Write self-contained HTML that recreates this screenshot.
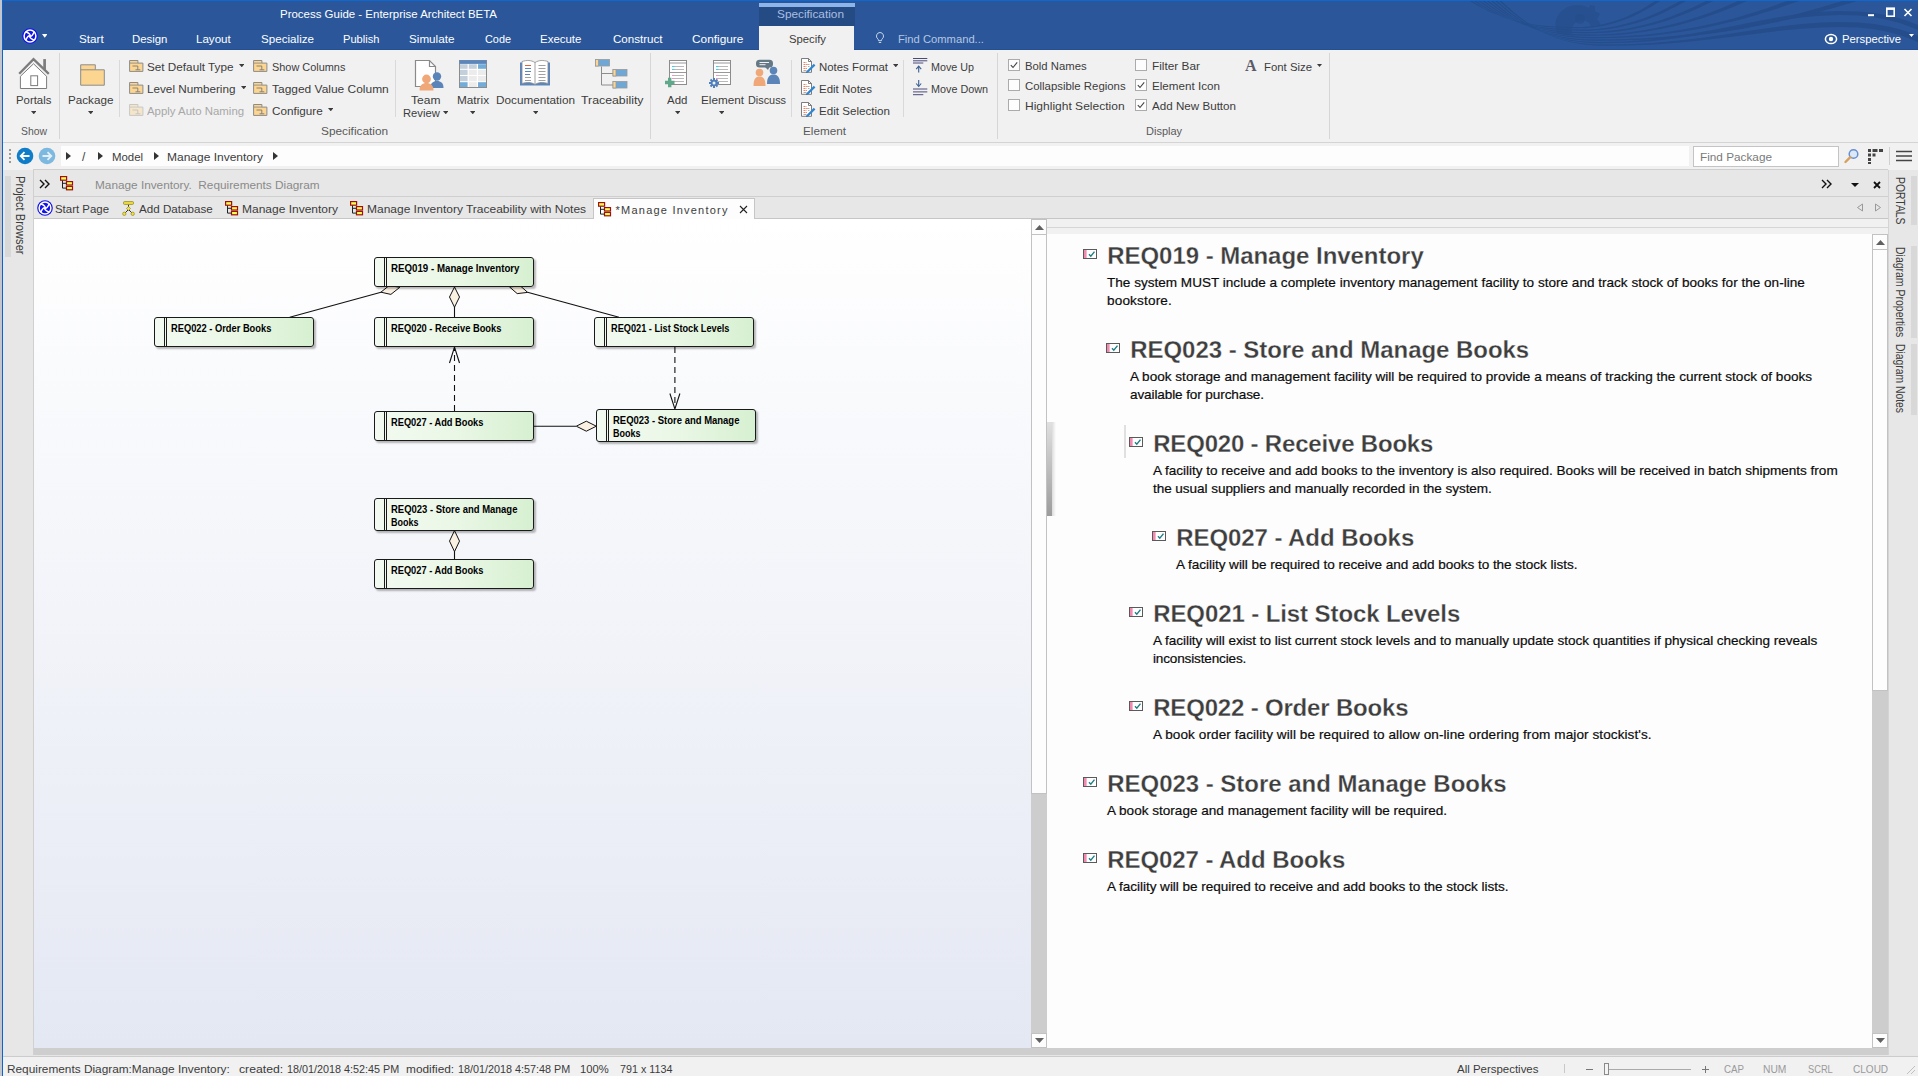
<!DOCTYPE html>
<html lang="en"><head><meta charset="utf-8"><title>Process Guide - Enterprise Architect BETA</title>
<style>
html,body{margin:0;padding:0}
body{width:1918px;height:1076px;overflow:hidden;position:relative;background:#f1f1f1;font-family:"Liberation Sans",sans-serif;font-size:11px;color:#3c3c3c}
.b{position:absolute;display:block}
.t{position:absolute;white-space:pre;line-height:16px;transform-origin:0 50%}
.h{position:absolute;white-space:pre;font:bold 24px/28px "Liberation Sans",sans-serif;color:#3e3e3e;-webkit-text-stroke:.28px #fdfdfd}
.p{position:absolute;white-space:pre;font:13.57px/18px "Liberation Sans",sans-serif;color:#0c0c0c;-webkit-text-stroke:.2px #0c0c0c}
.rq{position:absolute;white-space:pre;font:bold 10.8px/13px "Liberation Sans",sans-serif;color:#000;transform-origin:0 0}
.v{position:absolute;white-space:pre;font:13px/14px "Liberation Sans",sans-serif;color:#3c3c3c;transform-origin:0 0;transform:rotate(90deg)}
.el{position:absolute;box-sizing:border-box;border:1px solid #1a1a1a;border-radius:3px;background:linear-gradient(90deg,#f3faf1 0%,#eaf7e6 50%,#d7f0d1 100%);box-shadow:2px 2px 2px rgba(0,0,0,.28)}
.el i{position:absolute;top:0;bottom:0;left:9px;width:1px;border-left:1px solid #1a1a1a;border-right:1px solid #1a1a1a}
</style></head>
<body>
<div class="b" style="left:0px;top:0px;width:1918px;height:50px;background:#2b579a;"></div>
<div class="b" style="left:0px;top:0px;width:1918px;height:1px;background:#0d68d0;"></div>
<div class="b" style="left:3px;top:49px;width:1915px;height:1px;background:#244f93;"></div>
<svg class="b" style="left:1440px;top:1px" width="478" height="49" viewBox="0 0 478 49"><g fill="#244b88" opacity=".8"><polygon points="30.0,0.0 36.5,4.0 43.1,7.6 49.8,10.9 56.7,13.8 63.8,16.4 71.2,18.7 78.9,20.7 87.0,22.3 95.6,23.7 104.6,24.7 114.1,25.4 124.3,25.9 135.0,26.0 142.3,26.0 149.5,25.4 156.8,24.5 164.1,23.0 171.4,21.1 178.6,18.8 185.9,15.9 193.2,12.6 200.5,8.9 207.7,4.7 215.0,0.0 220.0,0.0 212.5,4.9 204.9,9.3 197.4,13.2 189.8,16.7 182.3,19.6 174.7,22.1 167.2,24.1 159.6,25.6 152.1,26.6 144.5,27.2 137.0,27.2 126.3,27.1 116.1,26.6 106.6,25.9 97.6,24.8 89.1,23.3 81.0,21.6 73.2,19.5 65.8,17.1 58.7,14.4 51.9,11.3 45.2,7.9 38.6,4.1 32.1,0.0"/><polygon points="34.2,0.0 40.7,4.3 47.2,8.2 53.9,11.7 60.8,14.9 67.9,17.8 75.3,20.3 83.0,22.5 91.1,24.3 99.6,25.8 108.6,27.0 118.1,27.8 128.3,28.3 139.0,28.5 148.2,28.4 157.4,27.9 166.5,26.8 175.7,25.2 184.9,23.1 194.1,20.5 203.3,17.4 212.5,13.8 221.6,9.7 230.8,5.1 240.0,0.0 246.0,0.0 236.5,5.3 226.9,10.1 217.4,14.4 207.8,18.2 198.3,21.4 188.7,24.1 179.2,26.3 169.6,27.9 160.1,29.1 150.5,29.7 141.0,29.8 130.3,29.6 120.1,29.0 110.6,28.2 101.6,26.9 93.1,25.3 85.0,23.4 77.3,21.1 70.0,18.5 62.9,15.5 56.0,12.1 49.3,8.4 42.8,4.4 36.3,0.0"/><polygon points="38.4,0.0 44.9,4.5 51.4,8.7 58.1,12.5 65.0,16.0 72.0,19.1 79.4,21.9 87.1,24.3 95.2,26.3 103.7,28.0 112.6,29.3 122.2,30.3 132.3,30.8 143.0,31.0 154.2,30.9 165.4,30.3 176.5,29.1 187.7,27.4 198.9,25.1 210.1,22.3 221.3,18.9 232.5,15.0 243.6,10.5 254.8,5.5 266.0,0.0 273.0,0.0 261.4,5.8 249.7,11.0 238.1,15.6 226.5,19.7 214.8,23.2 203.2,26.1 191.5,28.4 179.9,30.2 168.3,31.5 156.6,32.1 145.0,32.2 134.3,32.1 124.2,31.5 114.7,30.5 105.7,29.1 97.2,27.3 89.1,25.2 81.5,22.7 74.1,19.8 67.0,16.6 60.2,13.0 53.5,9.0 47.0,4.7 40.5,0.0"/><polygon points="42.6,0.0 49.1,4.8 55.6,9.3 62.3,13.4 69.1,17.1 76.2,20.5 83.5,23.5 91.2,26.1 99.2,28.3 107.7,30.2 116.7,31.6 126.2,32.7 136.3,33.3 147.0,33.5 160.7,33.4 174.5,32.7 188.2,31.4 201.9,29.5 215.6,27.1 229.4,24.0 243.1,20.4 256.8,16.2 270.5,11.4 284.3,6.0 298.0,0.0 307.0,0.0 292.6,6.2 278.3,11.8 263.9,16.8 249.5,21.1 235.2,24.9 220.8,28.1 206.5,30.6 192.1,32.6 177.7,33.9 163.4,34.6 149.0,34.8 138.3,34.5 128.2,33.9 118.7,32.8 109.7,31.3 101.3,29.3 93.2,27.0 85.6,24.3 78.2,21.2 71.2,17.7 64.4,13.8 57.7,9.6 51.2,5.0 44.7,0.0"/><polygon points="46.8,0.0 53.3,5.1 59.8,9.8 66.5,14.2 73.3,18.2 80.3,21.8 87.6,25.1 95.3,27.9 103.3,30.3 111.7,32.4 120.7,33.9 130.2,35.1 140.3,35.8 151.0,36.0 168.8,35.9 186.6,35.1 204.5,33.7 222.3,31.7 240.1,29.1 257.9,25.8 275.7,21.9 293.5,17.4 311.4,12.2 329.2,6.4 347.0,0.0 359.0,0.0 340.3,6.6 321.5,12.6 302.8,17.9 284.1,22.6 265.4,26.7 246.6,30.0 227.9,32.8 209.2,34.9 190.5,36.3 171.7,37.1 153.0,37.2 142.3,37.0 132.2,36.3 122.7,35.1 113.8,33.4 105.3,31.3 97.3,28.8 89.7,25.9 82.4,22.5 75.4,18.8 68.5,14.6 61.9,10.1 55.4,5.2 48.9,0.0"/><polygon points="51.0,0.0 57.5,5.4 64.0,10.4 70.6,15.0 77.4,19.3 84.4,23.2 91.7,26.7 99.4,29.7 107.4,32.3 115.8,34.5 124.7,36.2 134.2,37.5 144.3,38.2 155.0,38.5 177.5,38.3 199.9,37.5 222.4,36.0 244.8,33.9 267.3,31.0 289.7,27.5 312.2,23.4 334.6,18.5 357.1,13.0 379.5,6.8 402.0,0.0 417.0,0.0 393.4,7.1 369.7,13.4 346.1,19.1 322.5,24.1 298.8,28.4 275.2,32.0 251.5,35.0 227.9,37.2 204.3,38.7 180.6,39.6 157.0,39.8 146.3,39.5 136.2,38.7 126.7,37.4 117.8,35.6 109.4,33.4 101.4,30.6 93.8,27.5 86.5,23.9 79.5,19.9 72.7,15.5 66.1,10.7 59.6,5.5 53.1,0.0"/><polygon points="55.2,0.0 61.7,5.6 68.2,10.9 74.8,15.9 81.6,20.4 88.6,24.5 95.8,28.3 103.4,31.5 111.4,34.4 119.8,36.7 128.7,38.6 138.2,39.9 148.3,40.7 159.0,41.0 184.4,40.5 209.0,38.7 232.8,35.8 255.7,32.1 278.0,28.0 299.6,23.7 320.6,19.6 341.1,15.8 361.1,12.8 380.8,10.7 400.0,10.0 418.6,10.6 434.4,12.1 448.0,14.4 459.6,17.3 469.4,20.5 478.0,24.0 478.0,29.0 469.4,25.5 459.6,22.0 448.0,18.9 434.4,16.3 418.6,14.6 400.0,14.0 380.8,14.7 361.3,16.5 341.5,19.3 321.2,22.7 300.5,26.5 279.1,30.5 257.1,34.2 234.4,37.5 210.8,40.2 186.4,41.8 161.0,42.2 150.3,42.0 140.2,41.1 130.8,39.7 121.9,37.8 113.5,35.4 105.5,32.4 97.9,29.0 90.6,25.2 83.7,21.0 76.9,16.3 70.3,11.2 63.8,5.8 57.3,0.0"/><polygon points="59.4,0.0 65.9,5.9 72.4,11.5 79.0,16.7 85.7,21.5 92.7,25.9 100.0,29.8 107.5,33.3 115.5,36.4 123.9,38.9 132.8,40.9 142.2,42.3 152.3,43.2 163.0,43.5 188.4,43.2 212.7,41.9 236.0,39.8 258.5,37.2 280.3,34.2 301.3,31.1 321.8,28.0 341.9,25.3 361.5,23.0 380.8,21.5 400.0,21.0 418.6,21.6 434.4,23.1 448.0,25.4 459.6,28.3 469.4,31.5 478.0,35.0 478.0,41.0 469.4,37.5 459.6,34.0 448.0,30.9 434.4,28.3 418.6,26.6 400.0,26.0 380.9,26.5 361.7,27.7 342.2,29.6 322.4,31.9 302.2,34.4 281.4,37.1 259.9,39.6 237.7,41.8 214.5,43.5 190.3,44.5 165.0,44.8 154.3,44.4 144.2,43.5 134.8,42.0 125.9,40.0 117.5,37.4 109.6,34.2 102.0,30.6 94.8,26.6 87.8,22.0 81.1,17.1 74.5,11.8 68.0,6.1 61.5,0.0"/><path d="M118 33c-8-14 4-29 19-29 5 0 9 1 12 3l1-3 5 1 0 5 5 3-3 5c2 2 3 4 3 6l-9 1c-3-8-16-8-19 2 -1 3 0 6 2 8z" opacity=".7"/><circle cx="140" cy="18" r="5" opacity=".7"/></g></svg>
<div class="b" style="left:0px;top:0px;width:2px;height:1076px;background:#c3c7cd;"></div>
<div class="b" style="left:2px;top:0px;width:1px;height:1076px;background:#0f63cc;"></div>
<div class="t" style="left:280px;top:6.3px;color:#fff;transform:scaleX(1.042);">Process Guide - Enterprise Architect BETA</div>
<div class="b" style="left:759px;top:3px;width:96px;height:23px;background:#254b85;"></div>
<div class="b" style="left:759px;top:3px;width:96px;height:4px;background:#8db5ea;"></div>
<div class="t" style="left:776.5px;top:6.3px;color:#a9bfe0;transform:scaleX(1.074);">Specification</div>
<svg class="b" style="left:1865px;top:6px" width="50" height="16" viewBox="0 0 50 16"><g fill="none" stroke="#fff" stroke-width="1.6"><path d="M3 9.2h6" stroke-width="2"/>
<rect x="21.8" y="2.8" width="7.4" height="7.4"/><path d="M21 2.6h9" stroke-width="2.4"/>
<path d="M39.5 3l7 7M46.5 3l-7 7"/></g></svg>
<svg class="b" style="left:22px;top:28px" width="16" height="16" viewBox="0 0 16 16"><circle cx="8" cy="8" r="7.800" fill="#1212ea"/><circle cx="8" cy="8" r="5.900" fill="#1212ea" stroke="#fff" stroke-width="1.500"/><g fill="none" stroke="#fff" stroke-width="1.500"><path d="M3.800 3.800C7 5 9 7 8 8S9 11 12.200 12.200"/><path d="M12.200 3.800C11 7 9 9 8 8S5 9 3.800 12.200"/></g></svg>
<svg class="b" style="left:41.75px;top:33.9px" width="5.5" height="3.8" viewBox="0 0 5.5 3.8"><path d="M0 0H5.5L2.75 3.8Z" fill="#fff"/></svg>
<div class="t" style="left:79.4px;top:31.3px;color:#fff;transform:scaleX(1.063);">Start</div>
<div class="t" style="left:132.1px;top:31.3px;color:#fff;transform:scaleX(1.034);">Design</div>
<div class="t" style="left:196.2px;top:31.3px;color:#fff;transform:scaleX(1.051);">Layout</div>
<div class="t" style="left:260.6px;top:31.3px;color:#fff;transform:scaleX(1.057);">Specialize</div>
<div class="t" style="left:343.3px;top:31.3px;color:#fff;transform:scaleX(1.009);">Publish</div>
<div class="t" style="left:409.4px;top:31.3px;color:#fff;transform:scaleX(1.061);">Simulate</div>
<div class="t" style="left:484.5px;top:31.3px;color:#fff;transform:scaleX(0.989);">Code</div>
<div class="t" style="left:540.2px;top:31.3px;color:#fff;transform:scaleX(1.042);">Execute</div>
<div class="t" style="left:612.5px;top:31.3px;color:#fff;transform:scaleX(1.052);">Construct</div>
<div class="t" style="left:692.4px;top:31.3px;color:#fff;transform:scaleX(1.078);">Configure</div>
<div class="b" style="left:759px;top:26px;width:95px;height:24px;background:#f1f1f1;"></div>
<div class="t" style="left:788.5px;top:31.3px;transform:scaleX(1.026);">Specify</div>
<svg class="b" style="left:874px;top:31px" width="12" height="15" viewBox="0 0 12 15"><g fill="none" stroke="#c5d4ea" stroke-width="1"><path d="M6 1.5a3.6 3.6 0 0 1 2.2 6.4c-.5.5-.7 1-.7 1.8h-3c0-.8-.2-1.3-.7-1.8A3.6 3.6 0 0 1 6 1.5z"/><path d="M4.8 11.5h2.4"/></g></svg>
<div class="t" style="left:898.3px;top:31.3px;color:#b4c6e2;transform:scaleX(1.019);">Find Command...</div>
<svg class="b" style="left:1824px;top:32px" width="14" height="14" viewBox="0 0 14 14"><ellipse cx="7" cy="7" rx="5.6" ry="4.6" fill="none" stroke="#fff" stroke-width="1.5"/><circle cx="7" cy="7" r="2.2" fill="#fff"/></svg>
<div class="t" style="left:1842px;top:31.3px;color:#fff;transform:scaleX(1.027);">Perspective</div>
<svg class="b" style="left:1909.0px;top:33.5px" width="5" height="3" viewBox="0 0 5 3"><path d="M0 0H5L2.5 3Z" fill="#fff"/></svg>
<div class="b" style="left:3px;top:50px;width:1915px;height:92px;background:#f1f1f1;"></div>
<div class="b" style="left:3px;top:142px;width:1915px;height:1px;background:#d4d4d4;"></div>
<div class="b" style="left:59px;top:53px;width:1px;height:86px;background:#d6d6d6;"></div>
<div class="b" style="left:650px;top:53px;width:1px;height:86px;background:#d6d6d6;"></div>
<div class="b" style="left:997px;top:53px;width:1px;height:86px;background:#d6d6d6;"></div>
<div class="b" style="left:1329px;top:53px;width:1px;height:86px;background:#d6d6d6;"></div>
<div class="b" style="left:119px;top:60px;width:1px;height:57px;background:#d9d9d9;"></div>
<div class="b" style="left:395px;top:60px;width:1px;height:57px;background:#d9d9d9;"></div>
<div class="b" style="left:791px;top:60px;width:1px;height:57px;background:#d9d9d9;"></div>
<div class="b" style="left:903px;top:60px;width:1px;height:57px;background:#d9d9d9;"></div>
<div class="t" style="left:20.7px;top:123.3px;color:#595959;transform:scaleX(0.945);">Show</div>
<div class="t" style="left:321.3px;top:123.3px;color:#595959;transform:scaleX(1.076);">Specification</div>
<div class="t" style="left:803px;top:123.3px;color:#595959;transform:scaleX(1.066);">Element</div>
<div class="t" style="left:1146px;top:123.3px;color:#595959;">Display</div>
<svg class="b" style="left:17px;top:56px" width="34" height="34" viewBox="0 0 34 34"><path d="M3.400 20.300L16.500 7.800 29.600 20.300V32.500H3.400z" fill="#fff" stroke="#7c7c7c" stroke-width="1"/><path d="M2.200 17.800L16.500 3.200 31.800 17.800" fill="none" stroke="#7c7c7c" stroke-width="2.300"/><path d="M27.600 3.100v11" stroke="#7c7c7c" stroke-width="2.700"/><rect x="13.800" y="19.800" width="6.800" height="9.800" fill="#fff" stroke="#7c7c7c" stroke-width="1"/></svg>
<div class="t" style="left:16px;top:92.3px;transform:scaleX(1.034);">Portals</div>
<svg class="b" style="left:30.75px;top:110.75px" width="5.5" height="3.3" viewBox="0 0 5.5 3.3"><path d="M0 0H5.5L2.75 3.3Z" fill="#3c3c3c"/></svg>
<svg class="b" style="left:79px;top:63px" width="27" height="23" viewBox="0 0 27 23"><path d="M1.700 1.800h14.600v5h9v15.400H1.700z" fill="#fcd590" stroke="#8c8c8c" stroke-width="1"/><path d="M1.700 6.800h14.600" stroke="#8c8c8c" stroke-width="1"/></svg>
<div class="t" style="left:68px;top:92.3px;transform:scaleX(1.061);">Package</div>
<svg class="b" style="left:87.75px;top:110.75px" width="5.5" height="3.3" viewBox="0 0 5.5 3.3"><path d="M0 0H5.5L2.75 3.3Z" fill="#3c3c3c"/></svg>
<svg class="b" style="left:129px;top:60px;overflow:visible" width="16" height="16" viewBox="0 0 16 16"><path d="M.6 .5h8.300v2.600h5v8.300H.6z" fill="#fcd590" stroke="#8c8c8c" stroke-width="1"/><path d="M.6 3.100h8.300" stroke="#8c8c8c" stroke-width=".9"/><path d="M3.500 6h5.300v3.800M6.500 9.800h4.800" fill="none" stroke="#7a7a7a" stroke-width=".9"/></svg>
<div class="t" style="left:147.1px;top:59.3px;transform:scaleX(1.066);">Set Default Type</div>
<svg class="b" style="left:238.75px;top:64.14999999999999px" width="5.5" height="3.3" viewBox="0 0 5.5 3.3"><path d="M0 0H5.5L2.75 3.3Z" fill="#3c3c3c"/></svg>
<svg class="b" style="left:129px;top:82px;overflow:visible" width="16" height="16" viewBox="0 0 16 16"><path d="M.6 .5h8.300v2.600h5v8.300H.6z" fill="#fcd590" stroke="#8c8c8c" stroke-width="1"/><path d="M.6 3.100h8.300" stroke="#8c8c8c" stroke-width=".9"/><path d="M3.500 6h5.300v3.800M6.500 9.800h4.800" fill="none" stroke="#7a7a7a" stroke-width=".9"/></svg>
<div class="t" style="left:147.1px;top:81.3px;transform:scaleX(1.064);">Level Numbering</div>
<svg class="b" style="left:240.75px;top:86.14999999999999px" width="5.5" height="3.3" viewBox="0 0 5.5 3.3"><path d="M0 0H5.5L2.75 3.3Z" fill="#3c3c3c"/></svg>
<svg class="b" style="left:129px;top:104px;overflow:visible;opacity:.4" width="16" height="16" viewBox="0 0 16 16"><path d="M.6 .5h8.300v2.600h5v8.300H.6z" fill="#fcd590" stroke="#8c8c8c" stroke-width="1"/><path d="M.6 3.100h8.300" stroke="#8c8c8c" stroke-width=".9"/><path d="M3.500 6h5.300v3.800M6.500 9.800h4.800" fill="none" stroke="#7a7a7a" stroke-width=".9"/></svg>
<div class="t" style="left:147.1px;top:103.3px;color:#a8a8a8;transform:scaleX(1.038);">Apply Auto Naming</div>
<svg class="b" style="left:253px;top:60px;overflow:visible" width="16" height="16" viewBox="0 0 16 16"><path d="M.6 .5h8.300v2.600h5v8.300H.6z" fill="#fcd590" stroke="#8c8c8c" stroke-width="1"/><path d="M.6 3.100h8.300" stroke="#8c8c8c" stroke-width=".9"/><path d="M3.500 6h5.300v3.800M6.500 9.800h4.800" fill="none" stroke="#7a7a7a" stroke-width=".9"/></svg>
<div class="t" style="left:271.6px;top:59.3px;transform:scaleX(0.992);">Show Columns</div>
<svg class="b" style="left:253px;top:82px;overflow:visible" width="16" height="16" viewBox="0 0 16 16"><path d="M.6 .5h8.300v2.600h5v8.300H.6z" fill="#fcd590" stroke="#8c8c8c" stroke-width="1"/><path d="M.6 3.100h8.300" stroke="#8c8c8c" stroke-width=".9"/><path d="M3.500 6h5.300v3.800M6.500 9.800h4.800" fill="none" stroke="#7a7a7a" stroke-width=".9"/></svg>
<div class="t" style="left:271.6px;top:81.3px;transform:scaleX(1.087);">Tagged Value Column</div>
<svg class="b" style="left:253px;top:104px;overflow:visible" width="16" height="16" viewBox="0 0 16 16"><path d="M.6 .5h8.300v2.600h5v8.300H.6z" fill="#fcd590" stroke="#8c8c8c" stroke-width="1"/><path d="M.6 3.100h8.300" stroke="#8c8c8c" stroke-width=".9"/><path d="M3.500 6h5.300v3.800M6.500 9.800h4.800" fill="none" stroke="#7a7a7a" stroke-width=".9"/></svg>
<div class="t" style="left:271.6px;top:103.3px;transform:scaleX(1.063);">Configure</div>
<svg class="b" style="left:327.75px;top:108.14999999999999px" width="5.5" height="3.3" viewBox="0 0 5.5 3.3"><path d="M0 0H5.5L2.75 3.3Z" fill="#3c3c3c"/></svg>
<svg class="b" style="left:413px;top:59px" width="32" height="32" viewBox="0 0 32 32"><path d="M2.5 1.5h14l6 6v20h-20z" fill="#fff" stroke="#8a8a8a" stroke-width="1.2"/><path d="M16.5 1.5v6h6" fill="none" stroke="#8a8a8a" stroke-width="1.2"/>
<circle cx="24" cy="17.5" r="4.2" fill="#5b84b8"/><path d="M17.5 29c0-5 2.5-7 6.5-7s6.500 2 6.500 7z" fill="#5b84b8"/>
<circle cx="13.500" cy="20" r="4.400" fill="#f0a878"/><path d="M6.500 31.500c0-5.500 3-7.500 7-7.500s7 2 7 7.500z" fill="#f0a878"/></svg>
<div class="t" style="left:411px;top:92.3px;transform:scaleX(1.093);">Team</div>
<div class="t" style="left:403px;top:105.3px;transform:scaleX(1.020);">Review</div>
<svg class="b" style="left:442.75px;top:110.75px" width="5.5" height="3.3" viewBox="0 0 5.5 3.3"><path d="M0 0H5.5L2.75 3.3Z" fill="#3c3c3c"/></svg>
<svg class="b" style="left:459px;top:60px" width="28" height="28" viewBox="0 0 28 28"><rect x=".5" y=".5" width="27" height="27" fill="#fff" stroke="#8c8c8c"/><rect x=".5" y=".3" width="27" height="3.600" fill="#5b86bd"/>
<g fill="#c3d0dc"><rect x="1" y="4.200" width="7.600" height="4.600"/><rect x="9.800" y="4.200" width="8" height="4.600"/><rect x="1" y="9.800" width="7.600" height="5.200"/><rect x="1" y="16" width="7.600" height="5.200"/></g>
<g fill="#74acd8"><rect x="19" y="4.200" width="8" height="4.600"/><rect x="1" y="22.200" width="7.600" height="4.800"/><rect x="19" y="22.200" width="8" height="4.800"/></g>
<g fill="#ececec"><rect x="9.800" y="9.800" width="8" height="5.200"/><rect x="19" y="9.800" width="8" height="5.200"/><rect x="9.800" y="16" width="8" height="5.200"/><rect x="19" y="16" width="8" height="5.200"/><rect x="9.800" y="22.200" width="8" height="4.800"/></g></svg>
<div class="t" style="left:457px;top:92.3px;transform:scaleX(1.069);">Matrix</div>
<svg class="b" style="left:469.75px;top:110.75px" width="5.5" height="3.3" viewBox="0 0 5.5 3.3"><path d="M0 0H5.5L2.75 3.3Z" fill="#3c3c3c"/></svg>
<svg class="b" style="left:519px;top:59px" width="32" height="28" viewBox="0 0 32 28"><path d="M1 3.500h30V26.500H1z" fill="#5b86bd"/><path d="M3 2.500c5-1.500 9-1.500 13 1 4-2.500 8-2.500 13-1V24.500c-5-1.500-9-1.500-13 1-4-2.500-8-2.500-13-1z" fill="#fff" stroke="#8c8c8c" stroke-width=".8"/><path d="M16 3.500v22" stroke="#8c8c8c" stroke-width=".8"/>
<g stroke-width="1"><path d="M6 6.500h6" stroke="#e0603c"/><path d="M6 9.500h6M6 12.500h6M6 15.500h5" stroke="#5b86bd"/><path d="M6 18.500h6M6 21.500h6M19.500 6.500h7M19.500 9.500h7M19.500 12.500h7M19.500 15.500h7M19.500 18.500h7M19.500 21.500h7" stroke="#a0a0a0"/></g></svg>
<div class="t" style="left:496px;top:92.3px;transform:scaleX(1.068);">Documentation</div>
<svg class="b" style="left:532.75px;top:110.75px" width="5.5" height="3.3" viewBox="0 0 5.5 3.3"><path d="M0 0H5.5L2.75 3.3Z" fill="#3c3c3c"/></svg>
<svg class="b" style="left:595px;top:58px" width="33" height="32" viewBox="0 0 33 32"><path d="M6 8v27" stroke="none"/><path d="M6.500 8.500v18.500h12M6.500 15.500h12" fill="none" stroke="#8c8c8c" stroke-width="1"/>
<g stroke="#9a9a9a" stroke-width=".8"><rect x=".5" y="1.500" width="14" height="6.500" fill="#6fa8d6"/><rect x=".5" y="1.500" width="3" height="6.500" fill="#fcd592"/>
<rect x="18" y="11.500" width="14" height="6.500" fill="#6fa8d6"/><rect x="18" y="11.500" width="3" height="6.500" fill="#fcd592"/>
<rect x="18" y="23.500" width="14" height="6.500" fill="#6fa8d6"/><rect x="18" y="23.500" width="3" height="6.500" fill="#fcd592"/></g></svg>
<div class="t" style="left:581px;top:92.3px;transform:scaleX(1.119);">Traceability</div>
<svg class="b" style="left:664px;top:60px" width="26" height="30" viewBox="0 0 26 30"><rect x="5.500" y=".5" width="17" height="24" fill="#fff" stroke="#8c8c8c"/><path d="M5.500 3h17M5.500 12.500h17" stroke="#8c8c8c" stroke-width=".9"/><g stroke-width="1"><path d="M8 6.500h12M8 9.500h12M8 15.500h12M8 18.500h12M8 21.500h12" stroke="#b8b8b8"/><path d="M8 6.500h2.500M8 9.500h2.500" stroke="#40d0e8"/><path d="M8 15.500h2.500M8 18.500h2.500" stroke="#f890c8"/></g><path d="M1 22.500h9.500M5.700 17.800v9.500" stroke="#5fa88a" stroke-width="3.400"/></svg>
<div class="t" style="left:667px;top:92.3px;transform:scaleX(1.042);">Add</div>
<svg class="b" style="left:674.75px;top:110.75px" width="5.5" height="3.3" viewBox="0 0 5.5 3.3"><path d="M0 0H5.5L2.75 3.3Z" fill="#3c3c3c"/></svg>
<svg class="b" style="left:708px;top:60px" width="26" height="30" viewBox="0 0 26 30"><rect x="5.500" y=".5" width="17" height="24" fill="#fff" stroke="#8c8c8c"/><path d="M5.500 3h17M5.500 12.500h17" stroke="#8c8c8c" stroke-width=".9"/><g stroke-width="1"><path d="M8 6.500h12M8 9.500h12M8 15.500h12M8 18.500h12M8 21.500h12" stroke="#b8b8b8"/><path d="M8 6.500h2.500M8 9.500h2.500" stroke="#40d0e8"/><path d="M8 15.500h2.500M8 18.500h2.500" stroke="#f890c8"/></g><g transform="translate(6 23)"><g stroke="#4f7fbd" stroke-width="2"><path d="M0-5V5M-5 0H5M-3.500-3.500L3.500 3.500M3.500-3.500L-3.500 3.500"/></g><circle r="3.300" fill="#4f7fbd"/><circle r="1.500" fill="#f1f1f1"/></g></svg>
<div class="t" style="left:701px;top:92.3px;transform:scaleX(1.066);">Element</div>
<svg class="b" style="left:718.75px;top:110.75px" width="5.5" height="3.3" viewBox="0 0 5.5 3.3"><path d="M0 0H5.5L2.75 3.3Z" fill="#3c3c3c"/></svg>
<svg class="b" style="left:752px;top:59px" width="30" height="30" viewBox="0 0 30 30"><rect x="4" y=".8" width="17" height="7.800" rx="3.500" fill="#647886"/><path d="M13 8l3 3 1.500-3z" fill="#647886"/><path d="M7.500 3.500h9.500M7.500 5.700h6" stroke="#fff" stroke-width=".9"/>
<circle cx="7.500" cy="13.500" r="3.800" fill="#f0a878"/><path d="M1.500 27c0-7 2-9.500 6-9.500s6 2.500 6 9.500z" fill="#f0a878"/>
<circle cx="21.500" cy="11.500" r="3.800" fill="#5b84b8"/><path d="M15 25c0-7 2.500-9.500 6.500-9.500s6.500 2.500 6.500 9.500z" fill="#5b84b8"/></svg>
<div class="t" style="left:748px;top:92.3px;transform:scaleX(0.987);">Discuss</div>
<svg class="b" style="left:801px;top:58.3px;overflow:visible" width="16" height="16" viewBox="0 0 16 16"><path d="M.5.5h7l3 3v10.800h-10z" fill="#fff" stroke="#6e6e6e" stroke-width=".9"/><path d="M7.500.5v3h3" fill="none" stroke="#6e6e6e" stroke-width=".9"/><path d="M2.500 4.500h3M2.500 6.500h4M2.500 8.500h3M2.500 10.500h3.500" stroke="#f0603c" stroke-width=".8" stroke-dasharray="2 .6"/><path d="M6.500 6.500h2M7 8.500h1.500M2.500 12.500h3" stroke="#9a9a9a" stroke-width=".8"/><path d="M13.600 6.600l-7.400 7.400" stroke="#2f86d0" stroke-width="2.200"/><path d="M5 15l.6-1.900 1.300 1.300z" fill="#2f6ea8"/></svg>
<div class="t" style="left:819px;top:59.3px;transform:scaleX(1.036);">Notes Format</div>
<svg class="b" style="left:892.75px;top:64.14999999999999px" width="5.5" height="3.3" viewBox="0 0 5.5 3.3"><path d="M0 0H5.5L2.75 3.3Z" fill="#3c3c3c"/></svg>
<svg class="b" style="left:801px;top:80.3px;overflow:visible" width="16" height="16" viewBox="0 0 16 16"><path d="M.5.5h7l3 3v10.800h-10z" fill="#fff" stroke="#6e6e6e" stroke-width=".9"/><path d="M7.500.5v3h3" fill="none" stroke="#6e6e6e" stroke-width=".9"/><path d="M2.500 4.500h3M2.500 6.500h4M2.500 8.500h3M2.500 10.500h3.500" stroke="#f0603c" stroke-width=".8" stroke-dasharray="2 .6"/><path d="M6.500 6.500h2M7 8.500h1.500M2.500 12.500h3" stroke="#9a9a9a" stroke-width=".8"/><path d="M13.600 6.600l-7.400 7.400" stroke="#2f86d0" stroke-width="2.200"/><path d="M5 15l.6-1.900 1.300 1.300z" fill="#2f6ea8"/></svg>
<div class="t" style="left:819px;top:81.3px;transform:scaleX(1.044);">Edit Notes</div>
<svg class="b" style="left:801px;top:102.3px;overflow:visible" width="16" height="16" viewBox="0 0 16 16"><path d="M.5.5h7l3 3v10.800h-10z" fill="#fff" stroke="#6e6e6e" stroke-width=".9"/><path d="M7.500.5v3h3" fill="none" stroke="#6e6e6e" stroke-width=".9"/><path d="M2.500 4.500h3M2.500 6.500h4M2.500 8.500h3M2.500 10.500h3.500" stroke="#f0603c" stroke-width=".8" stroke-dasharray="2 .6"/><path d="M6.500 6.500h2M7 8.500h1.500M2.500 12.500h3" stroke="#9a9a9a" stroke-width=".8"/><path d="M13.600 6.600l-7.400 7.400" stroke="#2f86d0" stroke-width="2.200"/><path d="M5 15l.6-1.900 1.300 1.300z" fill="#2f6ea8"/></svg>
<div class="t" style="left:819px;top:103.3px;transform:scaleX(1.056);">Edit Selection</div>
<svg class="b" style="left:912.7px;top:58px;overflow:visible" width="16" height="16" viewBox="0 0 16 16"><path d="M0 .5h14.300M0 2.800h14.300M0 5h10.300" stroke="#4a4a7a" stroke-width="1"/><path d="M5.700 8.500v6" stroke="#3a5e94" stroke-width="1.100"/><path d="M3.200 11.200l2.500-3 2.500 3" fill="none" stroke="#3a5e94" stroke-width="1.100"/></svg>
<div class="t" style="left:931px;top:59.3px;transform:scaleX(0.977);">Move Up</div>
<svg class="b" style="left:912.7px;top:79.7px;overflow:visible" width="16" height="16" viewBox="0 0 16 16"><path d="M0 9h14.300M0 11.900h14.300M0 14.700h10.300" stroke="#4a4a7a" stroke-width="1"/><path d="M5.700 0v6" stroke="#3a5e94" stroke-width="1.100"/><path d="M3.200 3.500l2.500 3 2.500-3" fill="none" stroke="#3a5e94" stroke-width="1.100"/></svg>
<div class="t" style="left:931px;top:81.3px;transform:scaleX(0.981);">Move Down</div>
<svg class="b" style="left:1008px;top:59px" width="12" height="12" viewBox="0 0 12 12"><rect x=".5" y=".5" width="11" height="11" fill="#fdfdfd" stroke="#ababab"/><path d="M2.800 6.200l2.200 2.300 4.200-5.200" fill="none" stroke="#444" stroke-width="1.100"/></svg>
<div class="t" style="left:1025.4px;top:58.3px;transform:scaleX(1.028);">Bold Names</div>
<svg class="b" style="left:1008px;top:79px" width="12" height="12" viewBox="0 0 12 12"><rect x=".5" y=".5" width="11" height="11" fill="#fdfdfd" stroke="#ababab"/></svg>
<div class="t" style="left:1025.4px;top:78.3px;transform:scaleX(1.035);">Collapsible Regions</div>
<svg class="b" style="left:1008px;top:99px" width="12" height="12" viewBox="0 0 12 12"><rect x=".5" y=".5" width="11" height="11" fill="#fdfdfd" stroke="#ababab"/></svg>
<div class="t" style="left:1025.4px;top:98.3px;transform:scaleX(1.093);">Highlight Selection</div>
<svg class="b" style="left:1135px;top:59px" width="12" height="12" viewBox="0 0 12 12"><rect x=".5" y=".5" width="11" height="11" fill="#fdfdfd" stroke="#ababab"/></svg>
<div class="t" style="left:1152px;top:58.3px;transform:scaleX(1.076);">Filter Bar</div>
<svg class="b" style="left:1135px;top:79px" width="12" height="12" viewBox="0 0 12 12"><rect x=".5" y=".5" width="11" height="11" fill="#fdfdfd" stroke="#ababab"/><path d="M2.800 6.200l2.200 2.300 4.200-5.200" fill="none" stroke="#444" stroke-width="1.100"/></svg>
<div class="t" style="left:1152px;top:78.3px;transform:scaleX(1.059);">Element Icon</div>
<svg class="b" style="left:1135px;top:99px" width="12" height="12" viewBox="0 0 12 12"><rect x=".5" y=".5" width="11" height="11" fill="#fdfdfd" stroke="#ababab"/><path d="M2.800 6.200l2.200 2.300 4.200-5.200" fill="none" stroke="#444" stroke-width="1.100"/></svg>
<div class="t" style="left:1152px;top:98.3px;transform:scaleX(1.057);">Add New Button</div>
<div class="t" style="left:1245px;top:57.5px;font:bold 16px/16px 'Liberation Serif',serif;color:#5a5a6a">A</div>
<div class="t" style="left:1264px;top:59.3px;transform:scaleX(1.033);">Font Size</div>
<svg class="b" style="left:1317.0px;top:64.0px" width="5" height="3" viewBox="0 0 5 3"><path d="M0 0H5L2.5 3Z" fill="#3c3c3c"/></svg>
<div class="b" style="left:3px;top:143px;width:1915px;height:27px;background:#f1f1f1;"></div>
<div class="b" style="left:61px;top:146px;width:1628px;height:20px;background:#fdfdfd;"></div>
<svg class="b" style="left:8px;top:148px" width="4" height="16" viewBox="0 0 4 16"><g fill="#9a9a9a"><rect x="1" y="1" width="2" height="2"/><rect x="1" y="5" width="2" height="2"/><rect x="1" y="9" width="2" height="2"/><rect x="1" y="13" width="2" height="2"/></g></svg>
<svg class="b" style="left:16px;top:147px" width="18" height="18" viewBox="0 0 18 18"><circle cx="9" cy="9" r="8.300" fill="#0f7dc8"/><path d="M13.500 9H5M8.500 5.200L4.700 9l3.800 3.800" fill="none" stroke="#fff" stroke-width="1.800"/></svg>
<svg class="b" style="left:38px;top:147px" width="18" height="18" viewBox="0 0 18 18"><circle cx="9" cy="9" r="8.300" fill="#7cb8e0"/><path d="M4.500 9H13M9.500 5.200L13.300 9l-3.800 3.800" fill="none" stroke="#e4f0f8" stroke-width="1.800"/></svg>
<svg class="b" style="left:65.5px;top:152px" width="5" height="8" viewBox="0 0 5 8"><path d="M0 0L5 4L0 8Z" fill="#333"/></svg>
<div class="t" style="left:82px;top:149.3px;font-size:12px;">/</div>
<svg class="b" style="left:98.0px;top:152px" width="5" height="8" viewBox="0 0 5 8"><path d="M0 0L5 4L0 8Z" fill="#333"/></svg>
<div class="t" style="left:112.4px;top:149.3px;transform:scaleX(1.038);">Model</div>
<svg class="b" style="left:153.5px;top:152px" width="5" height="8" viewBox="0 0 5 8"><path d="M0 0L5 4L0 8Z" fill="#333"/></svg>
<div class="t" style="left:167px;top:149.3px;transform:scaleX(1.090);">Manage Inventory</div>
<svg class="b" style="left:272.5px;top:152px" width="5" height="8" viewBox="0 0 5 8"><path d="M0 0L5 4L0 8Z" fill="#333"/></svg>
<div class="b" style="left:1693px;top:145.5px;width:146px;height:21px;background:#fff;border:1px solid #c4c4c4;box-sizing:border-box"></div>
<div class="t" style="left:1700px;top:149.3px;color:#7a7a7a;transform:scaleX(1.070);">Find Package</div>
<svg class="b" style="left:1844px;top:148px" width="16" height="16" viewBox="0 0 16 16"><circle cx="9.500" cy="6" r="4.300" fill="#dbe8f8" stroke="#6a8fd0" stroke-width="1.500"/><path d="M6.300 9.200L1.500 14" stroke="#d8a060" stroke-width="2.400" stroke-linecap="round"/></svg>
<svg class="b" style="left:1868px;top:149px" width="16" height="16" viewBox="0 0 16 16"><g fill="#444"><rect x="0" y="0" width="3" height="3"/><rect x="4.500" y="0" width="5" height="3"/><rect x="11" y="0" width="4" height="3"/><rect x="0" y="4.500" width="3" height="3"/><rect x="4.500" y="4.500" width="3" height="3"/><rect x="0" y="9" width="3" height="3"/><rect x="0" y="13" width="3" height="2"/></g></svg>
<div class="b" style="left:1889px;top:147px;width:1px;height:18px;background:#d0d0d0;"></div>
<svg class="b" style="left:1896px;top:150px" width="16" height="12" viewBox="0 0 16 12"><path d="M0 1.500h16M0 6h16M0 10.500h16" stroke="#444" stroke-width="1.600"/></svg>
<div class="b" style="left:3px;top:170px;width:1915px;height:888px;background:#f1f1f1;"></div>
<div class="b" style="left:33px;top:169px;width:1855px;height:1px;background:#cfcfcf;"></div>
<div class="b" style="left:33px;top:170px;width:1855px;height:26px;background:#e7e7e7;"></div>
<div class="b" style="left:33px;top:196px;width:1855px;height:1px;background:#cfcfcf;"></div>
<div class="b" style="left:33px;top:197px;width:1855px;height:22px;background:#e7e7e7;"></div>
<div class="b" style="left:33px;top:218px;width:1855px;height:1px;background:#c6c6c6;"></div>
<div class="b" style="left:33px;top:170px;width:1px;height:888px;background:#d0d0d0;"></div>
<div class="b" style="left:3px;top:170px;width:30px;height:888px;background:#e7e7e7;"></div>
<div class="b" style="left:1888px;top:170px;width:30px;height:888px;background:#e7e7e7;"></div>
<div class="b" style="left:5px;top:176px;width:6px;height:81px;background:#d8d8d8;"></div>
<div class="v" style="left:27.1px;top:176.3px;transform:rotate(90deg) scaleX(0.856)">Project Browser</div>
<div class="b" style="left:1888px;top:170px;width:1px;height:888px;background:#d4d4d4;"></div>
<div class="b" style="left:1911px;top:176px;width:5.5px;height:49px;background:#d8d8d8;"></div>
<div class="b" style="left:1911px;top:246px;width:5.5px;height:92px;background:#d8d8d8;"></div>
<div class="b" style="left:1911px;top:344px;width:5.5px;height:71px;background:#d8d8d8;"></div>
<div class="v" style="left:1906.5px;top:176.5px;transform:rotate(90deg) scaleX(0.799)">PORTALS</div>
<div class="v" style="left:1906.5px;top:246.6px;transform:rotate(90deg) scaleX(0.806)">Diagram Properties</div>
<div class="v" style="left:1906.5px;top:344.4px;transform:rotate(90deg) scaleX(0.796)">Diagram Notes</div>
<svg class="b" style="left:39px;top:179px" width="11" height="10" viewBox="0 0 11 10"><path d="M1 1l4 4-4 4M6 1l4 4-4 4" fill="none" stroke="#111" stroke-width="1.400"/></svg>
<svg class="b" style="left:60px;top:176px" width="14" height="15" viewBox="0 0 14 15"><g fill="#ffff50" stroke="#a01010" stroke-width="1.200"><rect x=".6" y=".6" width="6" height="3.600"/><rect x="6.500" y="5.600" width="6" height="3.400"/><rect x="6.500" y="10.400" width="6" height="3.400"/></g><path d="M2.500 4.500v7.600h4M2.500 7.300h4" fill="none" stroke="#222" stroke-width="1"/></svg>
<div class="t" style="left:95.4px;top:177.3px;color:#8a8a8a;transform:scaleX(1.072);">Manage Inventory.  Requirements Diagram</div>
<svg class="b" style="left:1821px;top:179px" width="11" height="10" viewBox="0 0 11 10"><path d="M1 1l4 4-4 4M6 1l4 4-4 4" fill="none" stroke="#111" stroke-width="1.400"/></svg>
<svg class="b" style="left:1851.0px;top:182.5px" width="8" height="4" viewBox="0 0 8 4"><path d="M0 0H8L4.0 4Z" fill="#111"/></svg>
<svg class="b" style="left:1872.5px;top:180.5px" width="8" height="8" viewBox="0 0 8 8"><path d="M1 1l6 6M7 1l-6 6" stroke="#111" stroke-width="1.800"/></svg>
<svg class="b" style="left:37px;top:200px" width="16" height="16" viewBox="0 0 16 16"><circle cx="8" cy="8" r="7.800" fill="#1212ea"/><circle cx="8" cy="8" r="5.900" fill="#1212ea" stroke="#fff" stroke-width="1.500"/><g fill="none" stroke="#fff" stroke-width="1.500"><path d="M3.800 3.800C7 5 9 7 8 8S9 11 12.200 12.200"/><path d="M12.200 3.800C11 7 9 9 8 8S5 9 3.800 12.200"/></g></svg>
<div class="t" style="left:55.4px;top:200.7px;transform:scaleX(1.039);">Start Page</div>
<svg class="b" style="left:122px;top:201px" width="14" height="15" viewBox="0 0 14 15"><path d="M6.500 3.500v3M6.500 8.500L2.500 12.500M6.500 8.500l4 4" stroke="#333" stroke-width="1"/><rect x="1.500" y=".6" width="10" height="2.800" rx="1" fill="#f0e040" stroke="#8a7a10" stroke-width=".7"/><path d="M6.500 5.500l2 2-2 2-2-2z" fill="#f0e040" stroke="#8a7a10" stroke-width=".6"/><circle cx="2.300" cy="12.800" r="1.700" fill="#f0e040" stroke="#8a7a10" stroke-width=".6"/><circle cx="10.700" cy="12.800" r="1.700" fill="#f0e040" stroke="#8a7a10" stroke-width=".6"/></svg>
<div class="t" style="left:138.8px;top:200.7px;transform:scaleX(1.057);">Add Database</div>
<svg class="b" style="left:225px;top:201px" width="14" height="15" viewBox="0 0 14 15"><g fill="#ffff50" stroke="#a01010" stroke-width="1.200"><rect x=".6" y=".6" width="6" height="3.600"/><rect x="6.500" y="5.600" width="6" height="3.400"/><rect x="6.500" y="10.400" width="6" height="3.400"/></g><path d="M2.500 4.500v7.600h4M2.500 7.300h4" fill="none" stroke="#222" stroke-width="1"/></svg>
<div class="t" style="left:242px;top:200.7px;transform:scaleX(1.090);">Manage Inventory</div>
<svg class="b" style="left:350px;top:201px" width="14" height="15" viewBox="0 0 14 15"><g fill="#ffff50" stroke="#a01010" stroke-width="1.200"><rect x=".6" y=".6" width="6" height="3.600"/><rect x="6.500" y="5.600" width="6" height="3.400"/><rect x="6.500" y="10.400" width="6" height="3.400"/></g><path d="M2.500 4.500v7.600h4M2.500 7.300h4" fill="none" stroke="#222" stroke-width="1"/></svg>
<div class="t" style="left:367px;top:200.7px;transform:scaleX(1.089);">Manage Inventory Traceability with Notes</div>
<div class="b" style="left:593px;top:198px;width:162px;height:21px;background:#fdfdfd;border:1px solid #c6c6c6;border-bottom:none;box-sizing:border-box"></div>
<svg class="b" style="left:598px;top:202px" width="14" height="15" viewBox="0 0 14 15"><g fill="#ffff50" stroke="#a01010" stroke-width="1.200"><rect x=".6" y=".6" width="6" height="3.600"/><rect x="6.500" y="5.600" width="6" height="3.400"/><rect x="6.500" y="10.400" width="6" height="3.400"/></g><path d="M2.500 4.500v7.600h4M2.500 7.300h4" fill="none" stroke="#222" stroke-width="1"/></svg>
<div class="t" style="left:615.6px;top:201.7px;letter-spacing:1.22px;">*Manage Inventory</div>
<svg class="b" style="left:739px;top:205px" width="9" height="9" viewBox="0 0 9 9"><path d="M1 1l7 7M8 1l-7 7" stroke="#222" stroke-width="1.100"/></svg>
<svg class="b" style="left:1856px;top:203px" width="8" height="9" viewBox="0 0 8 9"><path d="M6.500 1L1.500 4.500l5 3.500z" fill="none" stroke="#999" stroke-width="1"/></svg>
<svg class="b" style="left:1874px;top:203px" width="8" height="9" viewBox="0 0 8 9"><path d="M1.500 1l5 3.500-5 3.500z" fill="none" stroke="#999" stroke-width="1"/></svg>
<div class="b" style="left:34px;top:219px;width:997px;height:829px;background:linear-gradient(180deg,#ffffff 0%,#e4e8f3 100%)"></div>
<svg class="b" style="left:35px;top:219px" width="997" height="829" viewBox="0 0 997 829"><g fill="none" stroke="#111" stroke-width="1.100">
<path d="M254.700 98.300L346 73.300"/><path d="M419.500 88v10"/><path d="M492.500 73.300L584 98.300"/>
<path d="M419.500 192V129" stroke-dasharray="6 4"/><path d="M414.500 144L419.500 128l5 16"/>
<path d="M639.900 128V189" stroke-dasharray="6 4"/><path d="M634.900 174.500l5 15.500 5-15.500"/>
<path d="M499 207.200h42"/><path d="M419.500 332v8"/></g>
<g fill="#fbf1e2" stroke="#111" stroke-width="1"><path d="M345.900 73.200l8.300-6.700 10.600 1.800-8.900 7.100z"/><path d="M419.500 68l5 10-5 10.200-5-10.200z"/><path d="M474.600 68l10.600 -1.200 7.500 6.600-10.500 1.200z"/>
<path d="M541.300 207.200l10-5 10 5-10 5z"/><path d="M419.500 311.600l5 10.500-5 10.500-5-10.500z"/></g></svg>
<div class="el" style="left:374px;top:257px;width:160px;height:30px"><i></i></div>
<div class="rq" style="left:391px;top:261.5px;transform:scaleX(0.900)">REQ019 - Manage Inventory</div>
<div class="el" style="left:154px;top:317px;width:160px;height:30px"><i></i></div>
<div class="rq" style="left:171px;top:321.5px;transform:scaleX(0.862)">REQ022 - Order Books</div>
<div class="el" style="left:374px;top:317px;width:160px;height:30px"><i></i></div>
<div class="rq" style="left:391px;top:321.5px;transform:scaleX(0.864)">REQ020 - Receive Books</div>
<div class="el" style="left:594px;top:317px;width:160px;height:30px"><i></i></div>
<div class="rq" style="left:611px;top:321.5px;transform:scaleX(0.851)">REQ021 - List Stock Levels</div>
<div class="el" style="left:374px;top:411px;width:160px;height:30px"><i></i></div>
<div class="rq" style="left:391px;top:415.5px;transform:scaleX(0.859)">REQ027 - Add Books</div>
<div class="el" style="left:596px;top:409px;width:160px;height:33px"><i></i></div>
<div class="rq" style="left:613px;top:413.5px;transform:scaleX(0.878)">REQ023 - Store and Manage</div>
<div class="rq" style="left:613px;top:426.5px;transform:scaleX(0.833)">Books</div>
<div class="el" style="left:374px;top:498px;width:160px;height:33px"><i></i></div>
<div class="rq" style="left:391px;top:502.5px;transform:scaleX(0.878)">REQ023 - Store and Manage</div>
<div class="rq" style="left:391px;top:515.5px;transform:scaleX(0.833)">Books</div>
<div class="el" style="left:374px;top:559px;width:160px;height:30px"><i></i></div>
<div class="rq" style="left:391px;top:563.5px;transform:scaleX(0.859)">REQ027 - Add Books</div>
<div class="b" style="left:1031px;top:219px;width:16px;height:829px;background:#cdcdcd;"></div>
<div class="b" style="left:1031px;top:219px;width:16px;height:16px;background:#fdfdfd;border:1px solid #c2c2c2;box-sizing:border-box"></div>
<svg class="b" style="left:1034.5px;top:224.5px" width="9" height="5" viewBox="0 0 9 5"><path d="M0 5L4.500 0 9 5z" fill="#606060"/></svg>
<div class="b" style="left:1031px;top:235px;width:16px;height:559px;background:#fdfdfd;border:1px solid #c2c2c2;border-top:none;box-sizing:border-box"></div>
<div class="b" style="left:1031px;top:1033px;width:16px;height:15px;background:#fdfdfd;border:1px solid #c2c2c2;box-sizing:border-box"></div>
<svg class="b" style="left:1034.5px;top:1038.0px" width="9" height="5" viewBox="0 0 9 5"><path d="M0 0L4.500 5 9 0z" fill="#606060"/></svg>
<div class="b" style="left:34px;top:1048px;width:1854px;height:7px;background:#cecece;"></div>
<div class="b" style="left:3px;top:1055px;width:1915px;height:1px;background:#e6e6e6;"></div>
<div class="b" style="left:3px;top:1056px;width:1915px;height:1px;background:#cccccc;"></div>
<div class="b" style="left:1047px;top:219px;width:841px;height:15px;background:#f1f1f1;"></div>
<div class="b" style="left:1047px;top:227px;width:841px;height:1px;background:#d6d6d6;"></div>
<div class="b" style="left:1047px;top:234px;width:825px;height:814px;background:#fdfdfd;"></div>
<div class="b" style="left:1872px;top:234px;width:16px;height:814px;background:#cdcdcd;"></div>
<div class="b" style="left:1872px;top:234px;width:16px;height:16px;background:#fdfdfd;border:1px solid #c2c2c2;box-sizing:border-box"></div>
<svg class="b" style="left:1875.5px;top:239.5px" width="9" height="5" viewBox="0 0 9 5"><path d="M0 5L4.500 0 9 5z" fill="#606060"/></svg>
<div class="b" style="left:1872px;top:250px;width:16px;height:441px;background:#fdfdfd;border:1px solid #c2c2c2;border-top:none;box-sizing:border-box"></div>
<div class="b" style="left:1872px;top:1033px;width:16px;height:15px;background:#fdfdfd;border:1px solid #c2c2c2;box-sizing:border-box"></div>
<svg class="b" style="left:1875.5px;top:1038.0px" width="9" height="5" viewBox="0 0 9 5"><path d="M0 0L4.500 5 9 0z" fill="#606060"/></svg>
<div class="b" style="left:1047px;top:422px;width:5px;height:94px;background:linear-gradient(180deg,#e0e0e0,#9c9c9c)"></div>
<div class="b" style="left:1052px;top:422px;width:4px;height:94px;background:linear-gradient(90deg,rgba(0,0,0,.13),rgba(0,0,0,0))"></div>
<div class="b" style="left:1124px;top:425px;width:2px;height:33px;background:#e0e0e0;"></div>
<svg class="b" style="left:1083px;top:249px" width="14" height="10" viewBox="0 0 14 10"><rect x=".5" y=".5" width="13" height="9" fill="#fff" stroke="#5a5a5a"/><rect x="1" y="1" width="2.600" height="8" fill="#f08ab0"/><path d="M6 5.200l1.800 2 3.700-4.600" fill="none" stroke="#1f7f86" stroke-width="1.400"/></svg>
<div class="h" style="left:1107.2px;top:241.5px;letter-spacing:-0.037px">REQ019 - Manage Inventory</div>
<div class="p" style="left:1107.0px;top:274px;">The system MUST include a complete inventory management facility to store and track stock of books for the on-line</div>
<div class="p" style="left:1107.0px;top:292px;letter-spacing:0.163px">bookstore.</div>
<svg class="b" style="left:1106px;top:343px" width="14" height="10" viewBox="0 0 14 10"><rect x=".5" y=".5" width="13" height="9" fill="#fff" stroke="#5a5a5a"/><rect x="1" y="1" width="2.600" height="8" fill="#f08ab0"/><path d="M6 5.200l1.800 2 3.700-4.600" fill="none" stroke="#1f7f86" stroke-width="1.400"/></svg>
<div class="h" style="left:1130.2px;top:335.5px;letter-spacing:-0.036px">REQ023 - Store and Manage Books</div>
<div class="p" style="left:1130.0px;top:368px;letter-spacing:0.012px">A book storage and management facility will be required to provide a means of tracking the current stock of books</div>
<div class="p" style="left:1130.0px;top:386px;letter-spacing:-0.110px">available for purchase.</div>
<svg class="b" style="left:1129px;top:437px" width="14" height="10" viewBox="0 0 14 10"><rect x=".5" y=".5" width="13" height="9" fill="#fff" stroke="#5a5a5a"/><rect x="1" y="1" width="2.600" height="8" fill="#f08ab0"/><path d="M6 5.200l1.800 2 3.700-4.600" fill="none" stroke="#1f7f86" stroke-width="1.400"/></svg>
<div class="h" style="left:1153.2px;top:429.5px;letter-spacing:-0.188px">REQ020 - Receive Books</div>
<div class="p" style="left:1153.0px;top:462px;letter-spacing:-0.018px">A facility to receive and add books to the inventory is also required. Books will be received in batch shipments from</div>
<div class="p" style="left:1153.0px;top:480px;letter-spacing:-0.062px">the usual suppliers and manually recorded in the system.</div>
<svg class="b" style="left:1152px;top:531px" width="14" height="10" viewBox="0 0 14 10"><rect x=".5" y=".5" width="13" height="9" fill="#fff" stroke="#5a5a5a"/><rect x="1" y="1" width="2.600" height="8" fill="#f08ab0"/><path d="M6 5.200l1.800 2 3.700-4.600" fill="none" stroke="#1f7f86" stroke-width="1.400"/></svg>
<div class="h" style="left:1176.2px;top:523.5px;letter-spacing:-0.065px">REQ027 - Add Books</div>
<div class="p" style="left:1176.0px;top:556px;letter-spacing:-0.036px">A facility will be required to receive and add books to the stock lists.</div>
<svg class="b" style="left:1129px;top:607px" width="14" height="10" viewBox="0 0 14 10"><rect x=".5" y=".5" width="13" height="9" fill="#fff" stroke="#5a5a5a"/><rect x="1" y="1" width="2.600" height="8" fill="#f08ab0"/><path d="M6 5.200l1.800 2 3.700-4.600" fill="none" stroke="#1f7f86" stroke-width="1.400"/></svg>
<div class="h" style="left:1153.2px;top:599.5px;letter-spacing:-0.095px">REQ021 - List Stock Levels</div>
<div class="p" style="left:1153.0px;top:632px;letter-spacing:-0.044px">A facility will exist to list current stock levels and to manually update stock quantities if physical checking reveals</div>
<div class="p" style="left:1153.0px;top:650px;letter-spacing:-0.162px">inconsistencies.</div>
<svg class="b" style="left:1129px;top:701px" width="14" height="10" viewBox="0 0 14 10"><rect x=".5" y=".5" width="13" height="9" fill="#fff" stroke="#5a5a5a"/><rect x="1" y="1" width="2.600" height="8" fill="#f08ab0"/><path d="M6 5.200l1.800 2 3.700-4.600" fill="none" stroke="#1f7f86" stroke-width="1.400"/></svg>
<div class="h" style="left:1153.2px;top:693.5px;letter-spacing:-0.178px">REQ022 - Order Books</div>
<div class="p" style="left:1153.0px;top:726px;letter-spacing:0.079px">A book order facility will be required to allow on-line ordering from major stockist&#x27;s.</div>
<svg class="b" style="left:1083px;top:777px" width="14" height="10" viewBox="0 0 14 10"><rect x=".5" y=".5" width="13" height="9" fill="#fff" stroke="#5a5a5a"/><rect x="1" y="1" width="2.600" height="8" fill="#f08ab0"/><path d="M6 5.200l1.800 2 3.700-4.600" fill="none" stroke="#1f7f86" stroke-width="1.400"/></svg>
<div class="h" style="left:1107.2px;top:769.5px;letter-spacing:-0.023px">REQ023 - Store and Manage Books</div>
<div class="p" style="left:1107.0px;top:802px;">A book storage and management facility will be required.</div>
<svg class="b" style="left:1083px;top:853px" width="14" height="10" viewBox="0 0 14 10"><rect x=".5" y=".5" width="13" height="9" fill="#fff" stroke="#5a5a5a"/><rect x="1" y="1" width="2.600" height="8" fill="#f08ab0"/><path d="M6 5.200l1.800 2 3.700-4.600" fill="none" stroke="#1f7f86" stroke-width="1.400"/></svg>
<div class="h" style="left:1107.2px;top:845.5px;letter-spacing:-0.065px">REQ027 - Add Books</div>
<div class="p" style="left:1107.0px;top:878px;letter-spacing:-0.036px">A facility will be required to receive and add books to the stock lists.</div>
<div class="b" style="left:3px;top:1057px;width:1915px;height:19px;background:#f1f1f1;"></div>
<div class="t" style="left:7.2px;top:1061.3px;transform:scaleX(1.075);">Requirements Diagram:Manage Inventory:</div>
<div class="t" style="left:239.3px;top:1061.3px;transform:scaleX(1.112);">created:</div>
<div class="t" style="left:287.4px;top:1061.3px;transform:scaleX(0.981);">18/01/2018 4:52:45 PM</div>
<div class="t" style="left:406.2px;top:1061.3px;transform:scaleX(1.078);">modified:</div>
<div class="t" style="left:458.2px;top:1061.3px;transform:scaleX(0.981);">18/01/2018 4:57:48 PM</div>
<div class="t" style="left:580.3px;top:1061.3px;transform:scaleX(1.020);">100%</div>
<div class="t" style="left:619.5px;top:1061.3px;transform:scaleX(0.979);">791 x 1134</div>
<div class="t" style="left:1456.8px;top:1061.3px;transform:scaleX(1.041);">All Perspectives</div>
<div class="b" style="left:1564px;top:1064px;width:1px;height:9px;background:#c8c8c8;"></div>
<div class="b" style="left:1586px;top:1069px;width:7px;height:1px;background:#777;"></div>
<div class="b" style="left:1608px;top:1069px;width:83px;height:1px;background:#aaa;"></div>
<div class="b" style="left:1604px;top:1063px;width:5px;height:12px;background:#f4f4f4;border:1px solid #8a8a8a;box-sizing:border-box"></div>
<div class="b" style="left:1702px;top:1069px;width:7px;height:1px;background:#777;"></div>
<div class="b" style="left:1705px;top:1066px;width:1px;height:7px;background:#777;"></div>
<div class="t" style="left:1724px;top:1061.3px;color:#9a9a9a;transform:scaleX(0.884);">CAP</div>
<div class="t" style="left:1763px;top:1061.3px;color:#9a9a9a;transform:scaleX(0.934);">NUM</div>
<div class="t" style="left:1807.5px;top:1061.3px;color:#9a9a9a;transform:scaleX(0.845);">SCRL</div>
<div class="t" style="left:1853.4px;top:1061.3px;color:#9a9a9a;transform:scaleX(0.912);">CLOUD</div>
<svg class="b" style="left:1904px;top:1063px" width="12" height="12" viewBox="0 0 12 12"><path d="M11 3L3 11M11 7L7 11" stroke="#c0c0c0" stroke-width="1"/></svg>
</body></html>
